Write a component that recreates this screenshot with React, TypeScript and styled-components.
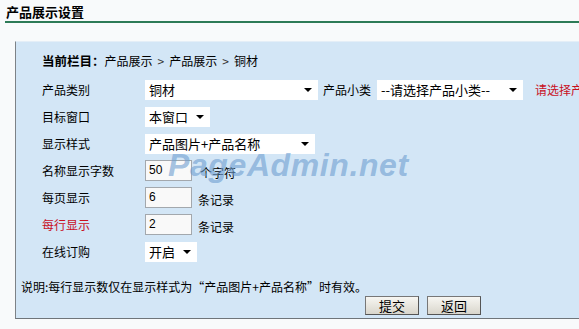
import React from 'react';
import styled, { createGlobalStyle } from 'styled-components';

const GlobalStyle = createGlobalStyle`
    html, body {
        margin: 0;
        padding: 0;
        background: #f8fafb;
        font-family: "Noto Sans CJK SC", "Liberation Sans", sans-serif;
        font-size: 12px;
        color: #000;
    }
`;

const Page = styled.div`
    width: 579px;
    height: 329px;
    overflow: hidden;
    background: #f8fafb;
`;

const Title = styled.div`
    padding: 3px 0 0 6px;
    height: 17px;
    font-size: 13px;
    font-weight: bold;
    line-height: 17px;
`;

const GreenLine = styled.div`
    margin: 1px 0 0 5px;
    height: 2px;
    background: #2d7b57;
`;

const Panel = styled.div`
    position: relative;
    margin: 18px 0 0 15px;
    width: 800px;
    height: 278px;
    box-sizing: border-box;
    background: #d3e6f6;
    border-top: 1px solid #e4eef7;
    border-left: 1px solid #7d8287;
    border-bottom: 1px solid #6f757a;
    padding: 12px 0 0 0;
`;

const Crumb = styled.div`
    padding-left: 26px;
    height: 14px;
    line-height: 14px;
    white-space: nowrap;
`;

const CrumbHead = styled.b`
    font-size: 12.5px;
`;

const Sep = styled.span`
    color: #333;
    margin: 0 5px;
`;

const Form = styled.div`
    margin-top: 8px;
    padding-left: 26px;
    display: grid;
    grid-template-columns: 103px auto;
    grid-auto-rows: 27px;
    align-items: center;
`;

const Label = styled.div<{ $red?: boolean }>`
    color: ${p => (p.$red ? '#c8101e' : '#000')};
    white-space: nowrap;
`;

const Field = styled.div`
    display: flex;
    align-items: center;
    white-space: nowrap;
`;

const SelectBox = styled.div<{ $w: number }>`
    width: ${p => p.$w}px;
    height: 20px;
    box-sizing: border-box;
    background: #fff;
    display: flex;
    align-items: center;
    padding: 0 5px 0 4px;
    font-size: 13px;
`;

const SelectText = styled.span`
    flex: 1;
    overflow: hidden;
`;

const Arrow = styled.span`
    width: 0;
    height: 0;
    border-left: 4px solid transparent;
    border-right: 4px solid transparent;
    border-top: 4px solid #000;
    margin-right: 1px;
`;

const Input = styled.div`
    width: 47px;
    height: 21px;
    box-sizing: border-box;
    background: #f9f9f9;
    border: 1px solid #a3a8ad;
    padding-left: 3px;
    font-family: "Liberation Sans", sans-serif;
    font-size: 12px;
    line-height: 19px;
`;

const Unit = styled.span<{ $gap: number }>`
    margin-left: ${p => p.$gap}px;
    padding-top: 3px;
`;

const Side = styled.span<{ $red?: boolean; $gap: number }>`
    margin-left: ${p => p.$gap}px;
    color: ${p => (p.$red ? '#c8101e' : '#000')};
`;

const Note = styled.div`
    margin-top: 15px;
    padding-left: 5px;
    height: 14px;
    line-height: 14px;
    white-space: nowrap;
`;

const ButtonBar = styled.div`
    display: flex;
    gap: 8px;
    padding-left: 349px;
    margin-top: 2px;
`;

const Button = styled.div`
    width: 54px;
    height: 19px;
    box-sizing: border-box;
    border: 1px solid #777;
    border-right-color: #555;
    border-bottom-color: #555;
    background: linear-gradient(#f7f6f2, #d9d6cc);
    text-align: center;
    line-height: 17px;
    font-size: 13px;
`;

// translucent watermark laid over the form
const Watermark = styled.div`
    position: absolute;
    left: 152px;
    top: 107px;
    font-family: "Liberation Sans", sans-serif;
    font-weight: bold;
    font-style: italic;
    font-size: 32px;
    letter-spacing: 0.6px;
    line-height: 32px;
    color: rgba(110, 158, 208, 0.62);
    pointer-events: none;
`;

const Select: React.FC<{ w: number; text: string }> = ({ w, text }) => (
    <SelectBox $w={w}>
        <SelectText>{text}</SelectText>
        <Arrow />
    </SelectBox>
);

export default function App() {
    return (
        <Page>
            <GlobalStyle />
            <Title>产品展示设置</Title>
            <GreenLine />
            <Panel>
                <Crumb>
                    <CrumbHead>当前栏目：</CrumbHead>产品展示<Sep>&gt;</Sep>产品展示<Sep>&gt;</Sep>铜材
                </Crumb>
                <Form>
                    <Label>产品类别</Label>
                    <Field>
                        <Select w={173} text="铜材" />
                        <Side $gap={5}>产品小类</Side>
                        <Side $gap={6}><Select w={146} text="--请选择产品小类--" /></Side>
                        <Side $gap={12} $red>请选择产品小类</Side>
                    </Field>

                    <Label>目标窗口</Label>
                    <Field><Select w={65} text="本窗口" /></Field>

                    <Label>显示样式</Label>
                    <Field><Select w={170} text="产品图片+产品名称" /></Field>

                    <Label>名称显示字数</Label>
                    <Field><Input>50</Input><Unit $gap={8}>个字符</Unit></Field>

                    <Label>每页显示</Label>
                    <Field><Input>6</Input><Unit $gap={6}>条记录</Unit></Field>

                    <Label $red>每行显示</Label>
                    <Field><Input>2</Input><Unit $gap={6}>条记录</Unit></Field>

                    <Label>在线订购</Label>
                    <Field><Select w={52} text="开启" /></Field>
                </Form>
                <Note>说明:每行显示数仅在显示样式为“产品图片+产品名称”时有效。</Note>
                <ButtonBar>
                    <Button>提交</Button>
                    <Button>返回</Button>
                </ButtonBar>
                <Watermark>PageAdmin.net</Watermark>
            </Panel>
        </Page>
    );
}
